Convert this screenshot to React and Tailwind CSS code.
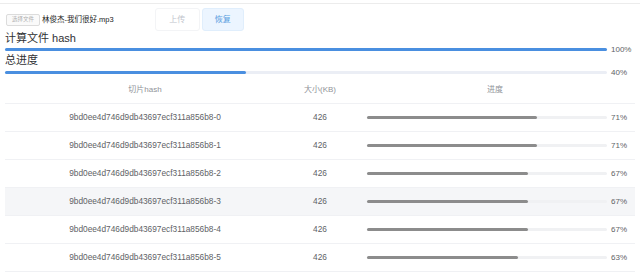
const rows = [
  { hash: "9bd0ee4d746d9db43697ecf311a856b8-0", size: 426, pct: 71 },
  { hash: "9bd0ee4d746d9db43697ecf311a856b8-1", size: 426, pct: 71 },
  { hash: "9bd0ee4d746d9db43697ecf311a856b8-2", size: 426, pct: 67 },
  { hash: "9bd0ee4d746d9db43697ecf311a856b8-3", size: 426, pct: 67, hover: true },
  { hash: "9bd0ee4d746d9db43697ecf311a856b8-4", size: 426, pct: 67 },
  { hash: "9bd0ee4d746d9db43697ecf311a856b8-5", size: 426, pct: 63 },
];

function Bar({ pct, color, width, track = "bg-[#ebeef5]" }) {
  return (
    <div className="flex items-center h-[3px]">
      <div className={`h-[3px] rounded-full ${track}`} style={{ width }}>
        <div className={`h-full rounded-full ${color}`} style={{ width: `${pct}%` }} />
      </div>
      <span className="ml-[4px] text-[8px] leading-none text-[#606266]">{pct}%</span>
    </div>
  );
}

export default function App() {
  return (
    <div
      className="w-[640px] h-[276px] overflow-hidden bg-white text-[#303133]"
      style={{ fontFamily: '"Liberation Sans", "Noto Sans CJK SC", sans-serif' }}
    >
      <div className="mt-[3px] border-t border-[#ececec]" />
      <div className="flex items-center h-[23px] mt-[4px] pl-[6px]">
        <div className="w-[34px] h-[12px] border border-[#dcdcdc] rounded-[2px] bg-[#fafafa] flex items-center justify-center text-[5.5px] text-[#b0b0b0]">
          选择文件
        </div>
        <span className="ml-[2px] text-[7.5px] text-[#222]">林俊杰-我们很好.mp3</span>
        <div className="ml-[41px] w-[45px] h-[23px] rounded-[3px] border border-[#f3f4f6] bg-white flex items-center justify-center text-[8px] text-[#c0c4cc]">
          上传
        </div>
        <div className="ml-[2px] w-[42px] h-[23px] rounded-[3px] border border-[#e0eefc] bg-[#ecf5ff] flex items-center justify-center text-[8px] text-[#5a9ee0]">
          恢复
        </div>
      </div>
      <div className="pl-[5px]">
        <div className="text-[11px] leading-[12px] mt-[1px]">计算文件 hash</div>
        <div className="mt-[4px]">
          <Bar pct={100} color="bg-[#4a8fe0]" width={602} />
        </div>
        <div className="text-[11px] leading-[12px] mt-[3px]">总进度</div>
        <div className="mt-[5px]">
          <Bar pct={40} color="bg-[#4a8fe0]" width={602} />
        </div>
      </div>
      <div className="mx-[5px] w-[630px] mt-[2px] text-[8.3px]">
        <div className="flex h-[28px] items-center border-b border-[#f0f1f4] text-[8px] text-[#909399]">
          <div className="w-[280px] text-center">切片hash</div>
          <div className="w-[70px] text-center">大小(KB)</div>
          <div className="w-[280px] text-center">进度</div>
        </div>
        {rows.map((r) => (
          <div
            key={r.hash}
            className={`flex h-[28px] items-center border-b border-[#f0f1f4] text-[#606266] ${r.hover ? "bg-[#f5f6f8]" : ""}`}
          >
            <div className="w-[280px] text-center">{r.hash}</div>
            <div className="w-[70px] text-center">{r.size}</div>
            <div className="w-[280px] pl-[12px]">
              <Bar pct={r.pct} color="bg-[#8c8c8c]" width={240} track="bg-[#f0f1f3]" />
            </div>
          </div>
        ))}
      </div>
    </div>
  );
}
